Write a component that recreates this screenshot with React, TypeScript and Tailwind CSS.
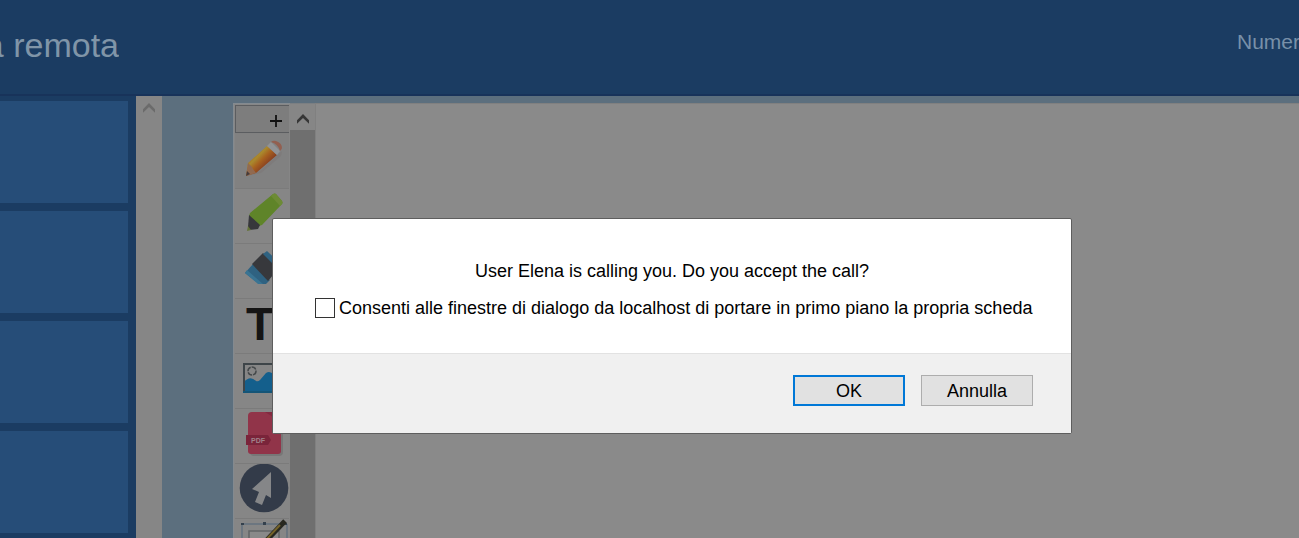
import type { ReactNode } from "react";

function Chevron({ className }: { className: string }) {
  return (
    <svg viewBox="0 0 12 10" className={className} aria-hidden="true">
      <path d="M0 6.2 6 0l6 6.2v3.6L6 4 0 9.8z" fill="currentColor" />
    </svg>
  );
}

function PencilIcon() {
  return (
    <svg viewBox="0 0 54 54" className="size-[54px]" aria-hidden="true">
      <defs>
        <linearGradient id="wood" x1="18" y1="20" x2="30" y2="32" gradientUnits="userSpaceOnUse">
          <stop offset="0" stopColor="#a26a2a" />
          <stop offset=".3" stopColor="#a98a2e" />
          <stop offset=".6" stopColor="#a8631f" />
          <stop offset="1" stopColor="#8b4220" />
        </linearGradient>
      </defs>
      <path d="m11 42 14-5 22-20-1 5-20 17z" fill="#7e7b7b" />
      <path d="m11 42 2-13 19-17 10 9-21 18z" fill="url(#wood)" />
      <path d="m11 42 2-13 4 4 1 2 3 4z" fill="#916a50" />
      <path d="m11 42 1-5 3 3z" fill="#453b3b" />
      <path d="m32 12 4-4 9 9-3 4z" fill="#919396" />
      <path d="M36 8q2-2 5-1 6 2 6 7 0 1-2 3-2-7-9-9z" fill="#925f50" />
    </svg>
  );
}

function MarkerIcon() {
  return (
    <svg viewBox="0 0 54 54" className="size-[54px]" aria-hidden="true">
      <path d="m14 27 1-3L38 5q2-1 3 0l6 7q1 2 0 3L27 36l-3 1z" fill="#5f8429" />
      <path d="m38 5q2-1 3 0l6 7q1 2 0 3l-2 2-9-10z" fill="#6d8b35" />
      <path d="m14 26 11 10-2 4-9 1-1-3z" fill="#37373b" />
      <path d="m13 37 3 4-4 1z" fill="#657438" />
    </svg>
  );
}

function EraserIcon() {
  return (
    <svg viewBox="0 0 54 54" className="size-[54px]" aria-hidden="true">
      <path d="m10 29 8-9 17 16-4 4h-7z" fill="#2f6281" />
      <path d="m10 29 2-3 16 14h-5z" fill="#397493" />
      <path d="m17 20 11-11 16 15-11 13z" fill="#37383c" />
      <path d="m28 10 4-3 16 15-4 4z" fill="#2f6281" />
    </svg>
  );
}

function ImageIcon() {
  return (
    <svg viewBox="0 0 54 54" className="size-[54px]" aria-hidden="true">
      <path d="M9 28q6-7 12-1 2 1 4-1l6-7q4-3 8 2l8 7v9H9z" fill="#145f8c" />
      <rect x="9" y="10" width="37" height="28" fill="none" stroke="#3e4549" strokeWidth="2" />
      <path d="M8 38h39" stroke="#155577" strokeWidth="2" />
      <circle cx="17" cy="17" r="4" fill="none" stroke="#45494b" strokeWidth="1.5" strokeDasharray="5 1" />
    </svg>
  );
}

function PdfIcon() {
  return (
    <svg viewBox="0 0 54 54" className="size-[54px]" aria-hidden="true">
      <rect x="15" y="5" width="33" height="42" rx="4" fill="#777" />
      <path d="M17 3h20l9 9v30q0 3-3 3H16q-3 0-3-3V7q0-4 4-4z" fill="#913449" />
      <path d="M30 3h7l9 9v8q-3-10-16-17z" fill="#842940" />
      <path d="M11 26h22l3 5-3 5H11z" fill="#7a243a" />
      <text x="16" y="34" fontFamily="Liberation Sans, sans-serif" fontWeight="700" fontSize="7" fill="#a1818a">PDF</text>
    </svg>
  );
}

function CursorIcon() {
  return (
    <svg viewBox="0 0 54 54" className="size-[54px]" aria-hidden="true">
      <circle cx="29" cy="24" r="24.3" fill="#333b49" />
      <path d="M36 8 17 25l7 3-4 10 7 3 4-10 5 3z" fill="#858688" />
    </svg>
  );
}

function DrawingIcon() {
  return (
    <svg viewBox="0 0 54 54" className="size-[54px]" aria-hidden="true">
      <path d="M7 5h45v45H7z" fill="none" stroke="#52677a" strokeWidth="1" />
      <path d="M14 12h30v30H14z" fill="#898989" stroke="#626466" strokeWidth="1.5" />
      <path d="M6 4h3v2H6zM28 3h3v3h-3zM49 4h3v2h-3z" fill="#34404c" />
      <path d="m50 2-20 21" stroke="#282820" strokeWidth="5" />
      <path d="m45 6-16 17" stroke="#756329" strokeWidth="2" />
    </svg>
  );
}

const tools: { name: string; icon: ReactNode }[] = [
  { name: "Matita", icon: <PencilIcon /> },
  { name: "Evidenziatore", icon: <MarkerIcon /> },
  { name: "Gomma", icon: <EraserIcon /> },
  { name: "Testo", icon: <span className="w-full pr-1 pt-0.5 text-center text-[46px] leading-none font-bold text-[#151515]">T</span> },
  { name: "Immagine", icon: <ImageIcon /> },
  { name: "Documento", icon: <PdfIcon /> },
  { name: "Puntatore", icon: <CursorIcon /> },
  { name: "Disegno", icon: <DrawingIcon /> },
];

function CallDialog() {
  return (
    <div
      role="dialog"
      aria-modal="true"
      aria-labelledby="call-message"
      className="absolute top-[218px] left-[272px] w-[800px] rounded-xs border border-[#5e5e5e] bg-white text-lg text-black"
    >
      <div className="flex flex-col gap-[9px] px-[42px] pt-[38px] pb-[31px] leading-7">
        <p id="call-message" className="text-center">
          User Elena is calling you. Do you accept the call?
        </p>
        <div className="flex items-center gap-1 whitespace-nowrap">
          <input id="allow-focus" type="checkbox" className="size-5 shrink-0 appearance-none border border-[#333] bg-white" />
          <label htmlFor="allow-focus">
            Consenti alle finestre di dialogo da localhost di portare in primo piano la propria scheda
          </label>
        </div>
      </div>
      <div className="flex justify-end gap-4 border-t border-[#e2e2e2] bg-[#f0f0f0] pt-[21px] pr-[38px] pb-[27px]">
        <button type="button" className="h-[31px] w-28 border-2 border-[#0078d7] bg-[#e1e1e1] leading-none">
          OK
        </button>
        <button type="button" className="h-[31px] w-28 border border-[#adadad] bg-[#e1e1e1] leading-none">
          Annulla
        </button>
      </div>
    </div>
  );
}

export default function App() {
  return (
    <div className="relative flex h-screen flex-col overflow-hidden bg-[#5c6f7e] font-['Liberation_Sans',Arial,sans-serif]">
      <header className="flex h-24 shrink-0 items-start justify-between border-b-2 border-[#18335a] bg-[#1b3c62]">
        <h1 className="flex w-[119px] justify-end overflow-hidden pt-[25px] text-[34px] leading-10 whitespace-nowrap text-[#8095a8]">
          a remota
        </h1>
        <p className="w-[62px] overflow-hidden pt-7 text-[21px] leading-7 text-[#7890a8]">Numer</p>
      </header>

      <main className="flex min-h-0 flex-1">
        <aside className="flex w-[136px] shrink-0 flex-col gap-2 overflow-hidden bg-[#1b3c62] pt-[5px] pr-2">
          {[1, 2, 3, 4].map((n) => (
            <section key={n} className="h-[102px] shrink-0 bg-[#264d78]" />
          ))}
        </aside>
        <div className="flex w-[26px] shrink-0 justify-center bg-[#868686] pt-[7px]">
          <Chevron className="h-[10px] w-3 text-[#6b6b6b]" />
        </div>

        <div className="flex min-w-0 flex-1 pt-[7px] pl-[71px]">
          <div className="flex w-[57px] shrink-0 flex-col overflow-hidden border-t border-l border-[#838a90] bg-[#868686] pt-px pr-px pl-px">
            <button
              type="button"
              aria-label="Aggiungi"
              className="flex h-7 shrink-0 items-center justify-end border border-r-0 border-[#5b5d60] bg-[#7d7d7d] pr-[7px]"
            >
              <svg viewBox="0 0 12 12" className="mt-1 size-3" aria-hidden="true">
                <path d="M6 0v12M0 6h12" stroke="#111" strokeWidth="1.8" />
              </svg>
            </button>
            {tools.map((tool, i) => (
              <button
                key={tool.name}
                type="button"
                aria-label={tool.name}
                className={`flex h-[55px] shrink-0 items-start border-t ${
                  i === 0 ? "border-[#808080] bg-[#818181]" : "border-[#7b7b7b]"
                }`}
              >
                {tool.icon}
              </button>
            ))}
          </div>
          <div className="flex w-[25px] shrink-0 flex-col items-center border-t border-[#7b7f82] bg-[#6f6f6f]">
            <div className="flex h-[26px] w-full shrink-0 justify-center bg-[#868686] pt-[10px]">
              <Chevron className="h-[10px] w-3 text-[#363636]" />
            </div>
          </div>
          <div className="flex-1 border-t border-l border-[#808080] bg-[#8a8a8a]" />
        </div>
      </main>

      <CallDialog />
    </div>
  );
}
